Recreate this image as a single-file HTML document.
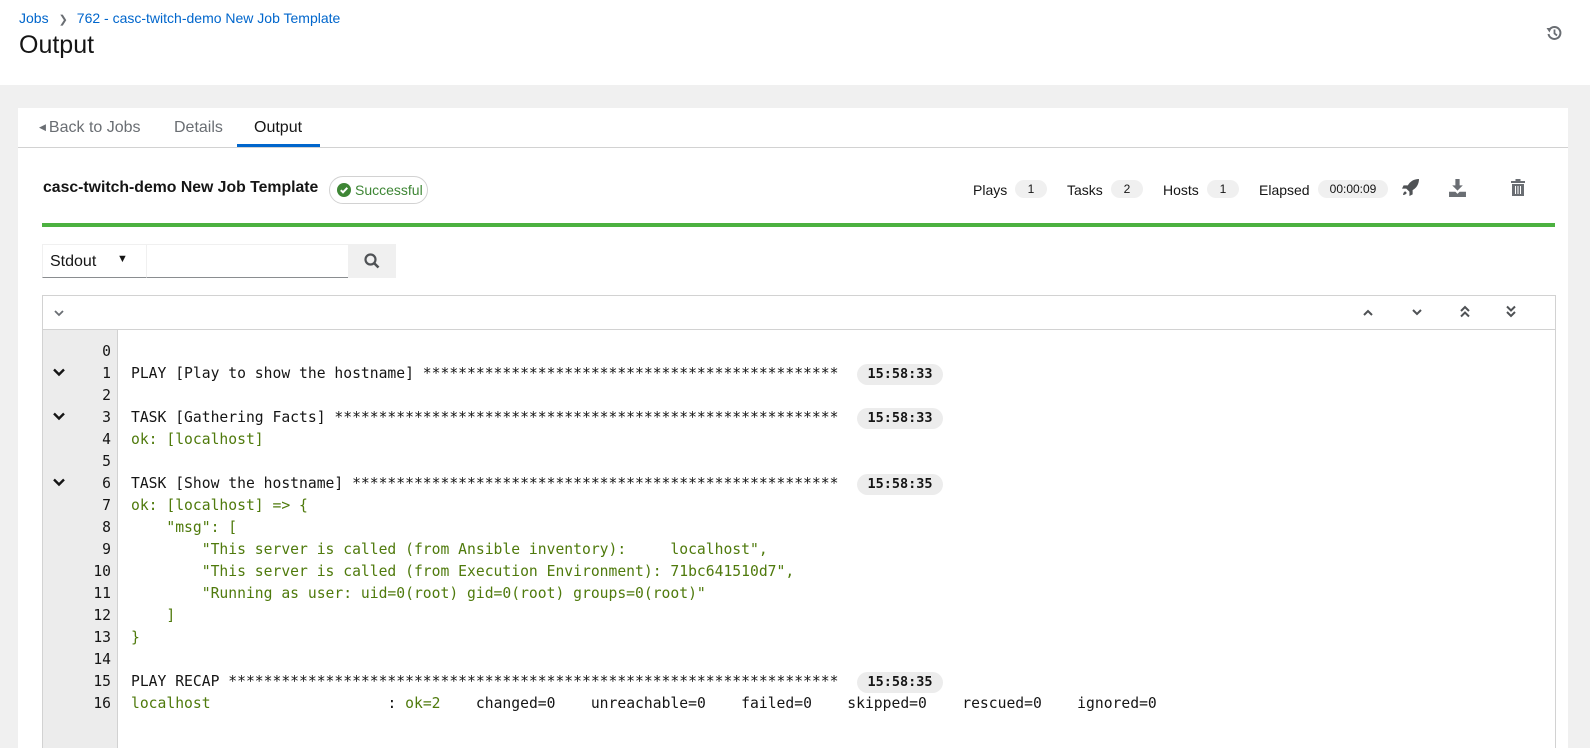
<!DOCTYPE html>
<html><head><meta charset="utf-8"><style>
*{box-sizing:border-box;margin:0;padding:0}
body{width:1590px;height:748px;overflow:hidden;background:#f0f0f0;font-family:"Liberation Sans",sans-serif;color:#151515;position:relative}
.hdr{position:absolute;left:0;top:0;width:1590px;height:85px;background:#fff}
.crumb{position:absolute;left:19px;top:10px;font-size:14px;color:#0066cc}
.crumb .sep{color:#6a6e73;margin:0 9px 0 10px;font-size:11px}
h1{position:absolute;left:19px;top:31px;font-size:25px;font-weight:400}
.card{position:absolute;left:18px;top:108px;width:1550px;height:640px;background:#fff;overflow:hidden}
.tabs{position:absolute;left:0;top:0;width:1550px;height:40px;border-bottom:1px solid #d2d2d2}
.tab{position:absolute;top:11px;font-size:16px;color:#6a6e73}
.ul{position:absolute;left:219px;top:36px;width:83px;height:3px;background:#06c}
.title{position:absolute;left:25px;top:71px;font-size:15.8px;font-weight:700}
.succ{position:absolute;left:311px;top:68px;width:99px;height:28px;border:1px solid #d2d2d2;border-radius:14px;font-size:14px;color:#3e8635;padding:5px 0 0 25px}
.succ svg{position:absolute;left:7px;top:6px}
.stats{position:absolute;top:74px;font-size:14px}
.pill{position:absolute;top:72px;height:18px;background:#f0f0f0;border-radius:9px;font-size:12px;text-align:center;line-height:18px}
.green{position:absolute;left:24px;top:115px;width:1513px;height:4px;background:#4cb140}
.sel{position:absolute;left:24px;top:136px;width:104px;height:34px;border-bottom:1px solid #8a8d90;font-size:16px;padding:8px 0 0 7px;border-top:1px solid #f0f0f0;border-left:1px solid #f0f0f0}
.inp{position:absolute;left:128px;top:136px;width:202px;height:34px;border-bottom:1px solid #8a8d90;border-top:1px solid #f0f0f0;border-left:1px solid #f0f0f0}
.sbtn{position:absolute;left:330px;top:136px;width:48px;height:34px;background:#f0f0f0}
.log{position:absolute;left:24px;top:187px;width:1514px;height:453px;border:1px solid #d2d2d2;border-bottom:none;overflow:hidden}
.tb{height:34px;border-bottom:1px solid #d2d2d2;position:relative}
.gut{position:absolute;left:0;top:34px;width:75px;height:419px;background:#ececec;border-right:1px solid #d2d2d2}
.line{position:absolute;left:0;height:22px;width:1512px;font-family:"DejaVu Sans Mono","Liberation Mono",monospace;font-size:14.7px;line-height:22px;white-space:pre}
.ln{position:absolute;left:0;width:68px;text-align:right;color:#151515}
.tx{position:absolute;left:88px}
.g{color:#4f7a0c}
.ts{position:absolute;left:814px;top:1px;width:86px;height:21px;background:#ececec;border-radius:11px;font-weight:700;font-size:13.5px;line-height:21px;text-align:center}
.car{position:absolute;left:10px;top:5px}
</style></head><body>
<div class="hdr">
<div class="crumb">Jobs<span class="sep">❯</span>762 - casc-twitch-demo New Job Template</div>
<h1>Output</h1>
<svg style="position:absolute;left:1546px;top:25px" width="16" height="16" viewBox="0 0 16 16"><path d="M3.5 4.5A6 6 0 1 1 2.5 9" fill="none" stroke="#6a6e73" stroke-width="2"/><path d="M0.5 3L5.5 3 3.5 7.5Z" fill="#6a6e73"/><path d="M8.5 4.5V8.5L11 10.5" fill="none" stroke="#6a6e73" stroke-width="1.8"/></svg>
</div>
<div class="card">
<div class="tabs">
<div class="tab" style="left:21px"><span style="font-size:9px;position:relative;top:-2px;margin-right:3px">◀</span>Back to Jobs</div>
<div class="tab" style="left:156px">Details</div>
<div class="tab" style="left:236px;color:#151515">Output</div>
<div class="ul"></div>
</div>
<div class="title">casc-twitch-demo New Job Template</div>
<div class="succ"><svg width="14" height="14" viewBox="0 0 14 14"><circle cx="7" cy="7" r="7" fill="#3e8635"/><path d="M3.8 7.2L6 9.3 10.3 4.8" fill="none" stroke="#fff" stroke-width="2"/></svg>Successful</div>
<div class="stats" style="left:955px">Plays</div><div class="pill" style="left:997px;width:32px">1</div>
<div class="stats" style="left:1049px">Tasks</div><div class="pill" style="left:1093px;width:32px">2</div>
<div class="stats" style="left:1145px">Hosts</div><div class="pill" style="left:1189px;width:32px">1</div>
<div class="stats" style="left:1241px">Elapsed</div><div class="pill" style="left:1300px;width:70px">00:00:09</div>
<svg style="position:absolute;left:1384px;top:71px" width="17" height="17" viewBox="0 0 16 16"><path d="M16 0C11 0 7.5 2.5 5.5 6H1.5L0 9h4L7 12v4l3-1.5V10.5C13.5 8.5 16 5 16 0z" fill="#4f5255"/><path d="M3 11.5C1 12.5 1 15 1 15s2.5 0 3.5-2z" fill="#4f5255"/></svg>
<svg style="position:absolute;left:1431px;top:71px" width="17" height="18" viewBox="0 0 16 17"><path d="M6 0h4v6h3l-5 5-5-5h3z" fill="#6a6e73"/><path d="M0 12h6l2 2 2-2h6v5H0z" fill="#6a6e73"/></svg>
<svg style="position:absolute;left:1493px;top:71px" width="14" height="17" viewBox="0 0 14 17"><rect x="0" y="2" width="14" height="2" fill="#6a6e73"/><rect x="4.5" y="0" width="5" height="2" fill="#6a6e73"/><path d="M1 5h12v12H1z" fill="#6a6e73"/><path d="M4.5 7v8M7 7v8M9.5 7v8" stroke="#fff" stroke-width="1"/></svg>
<div class="green"></div>
<div class="sel">Stdout<span style="position:absolute;left:74px;top:8px;font-size:11px">▼</span></div>
<div class="inp"></div>
<div class="sbtn"><svg style="position:absolute;left:16px;top:9px" width="16" height="16" viewBox="0 0 16 16"><circle cx="6.5" cy="6.5" r="5" fill="none" stroke="#4f5255" stroke-width="2.2"/><path d="M10 10l4.5 4.5" stroke="#4f5255" stroke-width="2.6"/></svg></div>
<div class="log">
<div class="tb">
<svg style="position:absolute;left:11px;top:14px" width="10" height="7" viewBox="0 0 10 7"><path d="M1 1l4 4 4-4" fill="none" stroke="#6a6e73" stroke-width="1.8"/></svg>
<svg style="position:absolute;left:1320px;top:13px" width="10" height="7" viewBox="0 0 10 7"><path d="M1 6l4-4 4 4" fill="none" stroke="#4f5255" stroke-width="2"/></svg>
<svg style="position:absolute;left:1369px;top:13px" width="10" height="7" viewBox="0 0 10 7"><path d="M1 1l4 4 4-4" fill="none" stroke="#4f5255" stroke-width="2"/></svg>
<svg style="position:absolute;left:1417px;top:9px" width="10" height="13" viewBox="0 0 10 13"><path d="M1 6l4-4 4 4M1 11.5l4-4 4 4" fill="none" stroke="#4f5255" stroke-width="2"/></svg>
<svg style="position:absolute;left:1463px;top:9px" width="10" height="13" viewBox="0 0 10 13"><path d="M1 1.5l4 4 4-4M1 7l4 4 4-4" fill="none" stroke="#4f5255" stroke-width="2"/></svg>
</div>
<div class="gut"></div>
<div style="position:absolute;left:0;top:45px">
<div class="line" style="top:0"><span class="ln">0</span></div>
<div class="line" style="top:22px"><svg class="car" width="12" height="9" viewBox="0 0 12 9"><path d="M1 1.5l5 5 5-5" fill="none" stroke="#151515" stroke-width="2.4"/></svg><span class="ln">1</span><span class="tx">PLAY [Play to show the hostname] ***********************************************</span><span class="ts">15:58:33</span></div>
<div class="line" style="top:44px"><span class="ln">2</span></div>
<div class="line" style="top:66px"><svg class="car" width="12" height="9" viewBox="0 0 12 9"><path d="M1 1.5l5 5 5-5" fill="none" stroke="#151515" stroke-width="2.4"/></svg><span class="ln">3</span><span class="tx">TASK [Gathering Facts] *********************************************************</span><span class="ts">15:58:33</span></div>
<div class="line" style="top:88px"><span class="ln">4</span><span class="tx g">ok: [localhost]</span></div>
<div class="line" style="top:110px"><span class="ln">5</span></div>
<div class="line" style="top:132px"><svg class="car" width="12" height="9" viewBox="0 0 12 9"><path d="M1 1.5l5 5 5-5" fill="none" stroke="#151515" stroke-width="2.4"/></svg><span class="ln">6</span><span class="tx">TASK [Show the hostname] *******************************************************</span><span class="ts">15:58:35</span></div>
<div class="line" style="top:154px"><span class="ln">7</span><span class="tx g">ok: [localhost] =&gt; {</span></div>
<div class="line" style="top:176px"><span class="ln">8</span><span class="tx g">    "msg": [</span></div>
<div class="line" style="top:198px"><span class="ln">9</span><span class="tx g">        "This server is called (from Ansible inventory):     localhost",</span></div>
<div class="line" style="top:220px"><span class="ln">10</span><span class="tx g">        "This server is called (from Execution Environment): 71bc641510d7",</span></div>
<div class="line" style="top:242px"><span class="ln">11</span><span class="tx g">        "Running as user: uid=0(root) gid=0(root) groups=0(root)"</span></div>
<div class="line" style="top:264px"><span class="ln">12</span><span class="tx g">    ]</span></div>
<div class="line" style="top:286px"><span class="ln">13</span><span class="tx g">}</span></div>
<div class="line" style="top:308px"><span class="ln">14</span></div>
<div class="line" style="top:330px"><span class="ln">15</span><span class="tx">PLAY RECAP *********************************************************************</span><span class="ts">15:58:35</span></div>
<div class="line" style="top:352px"><span class="ln">16</span><span class="tx"><span class="g">localhost</span>                    : <span class="g">ok=2</span>    changed=0    unreachable=0    failed=0    skipped=0    rescued=0    ignored=0</span></div>
</div>
</div>
</div>
</body></html>
